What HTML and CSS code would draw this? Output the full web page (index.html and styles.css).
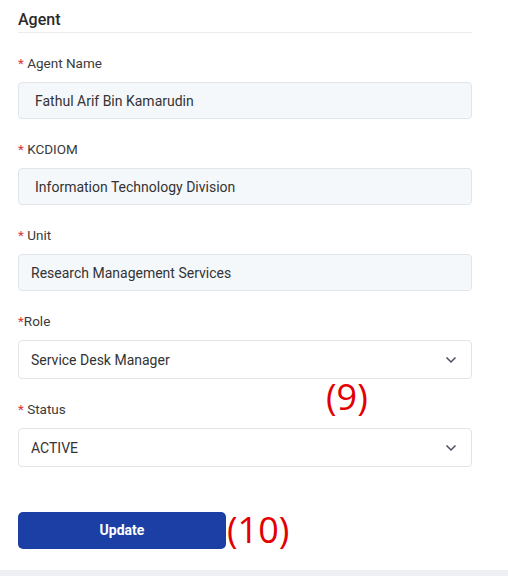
FILE: index.html
```html
<!DOCTYPE html>
<html lang="en">
<head>
    <meta charset="UTF-8">
    <meta name="viewport" content="width=device-width, initial-scale=1.0">
    <title>Agent</title>
    <link rel="stylesheet" href="styles.css">
</head>
<body>
    <div class="card">
        <h2 class="card-title">Agent</h2>

        <div class="field">
            <label class="label"><span class="req">*</span> Agent Name</label>
            <div class="input readonly wide">Fathul Arif Bin Kamarudin</div>
        </div>

        <div class="field">
            <label class="label"><span class="req">*</span> KCDIOM</label>
            <div class="input readonly wide">Information Technology Division</div>
        </div>

        <div class="field">
            <label class="label"><span class="req">*</span> Unit</label>
            <div class="input readonly">Research Management Services</div>
        </div>

        <div class="field">
            <label class="label"><span class="req">*</span>Role</label>
            <div class="input select">
                <span>Service Desk Manager</span>
                <svg class="chevron" width="12" height="8" viewBox="0 0 12 8"><path d="M1.5 1.5 L6 6 L10.5 1.5" fill="none" stroke="#4a4f5c" stroke-width="1.5"/></svg>
            </div>
        </div>

        <div class="field status">
            <label class="label"><span class="req">*</span> Status</label>
            <span class="note note-9">(9)</span>
            <div class="input select">
                <span>ACTIVE</span>
                <svg class="chevron" width="12" height="8" viewBox="0 0 12 8"><path d="M1.5 1.5 L6 6 L10.5 1.5" fill="none" stroke="#4a4f5c" stroke-width="1.5"/></svg>
            </div>
        </div>

        <div class="actions">
            <button class="btn-primary">Update</button>
            <span class="note">(10)</span>
        </div>
    </div>
</body>
</html>
```

FILE: styles.css
```css
body {
    margin: 0;
    font-family: Roboto, "Liberation Sans", Arial, sans-serif;
    background-color: #eef0f3;
    color: #333;
}
.card {
    background: white;
    height: 570px;
    box-sizing: border-box;
    padding: 8px 36px 0 18px;
}
.card-title {
    margin: 0;
    font-size: 16px;
    font-weight: 500;
    line-height: 24px;
    border-bottom: 1px solid #ececec;
    color: #2b2b2b;
}
.field {
    margin-top: 20px;
}
.field.status {
    position: relative;
}
.label {
    display: block;
    font-size: 13.5px;
    line-height: 20px;
    margin-bottom: 9px;
    color: #3a3a3a;
}
.req {
    color: #d9363e;
}
.input {
    height: 37px;
    box-sizing: border-box;
    border: 1px solid #e1e5ea;
    border-radius: 4px;
    padding: 0 12px;
    display: flex;
    align-items: center;
    font-size: 14px;
    color: #333;
}
.readonly {
    background: #f5f8fb;
}
.readonly.wide {
    padding-left: 16px;
}
.select {
    height: 39px;
    background: white;
    justify-content: space-between;
    padding-right: 14px;
}
.chevron {
    display: block;
}
.actions {
    margin-top: 43px;
    display: flex;
    align-items: center;
}
.btn-primary {
    width: 208px;
    height: 37px;
    border: none;
    border-radius: 5px;
    background: #1c3fa6;
    color: white;
    font-family: Roboto, Arial, sans-serif;
    font-size: 14px;
    font-weight: 700;
}
.note {
    color: #e30000;
    font-family: "Open Sans", "Noto Sans", sans-serif;
    font-size: 36px;
    line-height: 40px;
    margin-left: 1px;
}
.note-9 {
    position: absolute;
    left: 307px;
    top: -22px;
}
```
